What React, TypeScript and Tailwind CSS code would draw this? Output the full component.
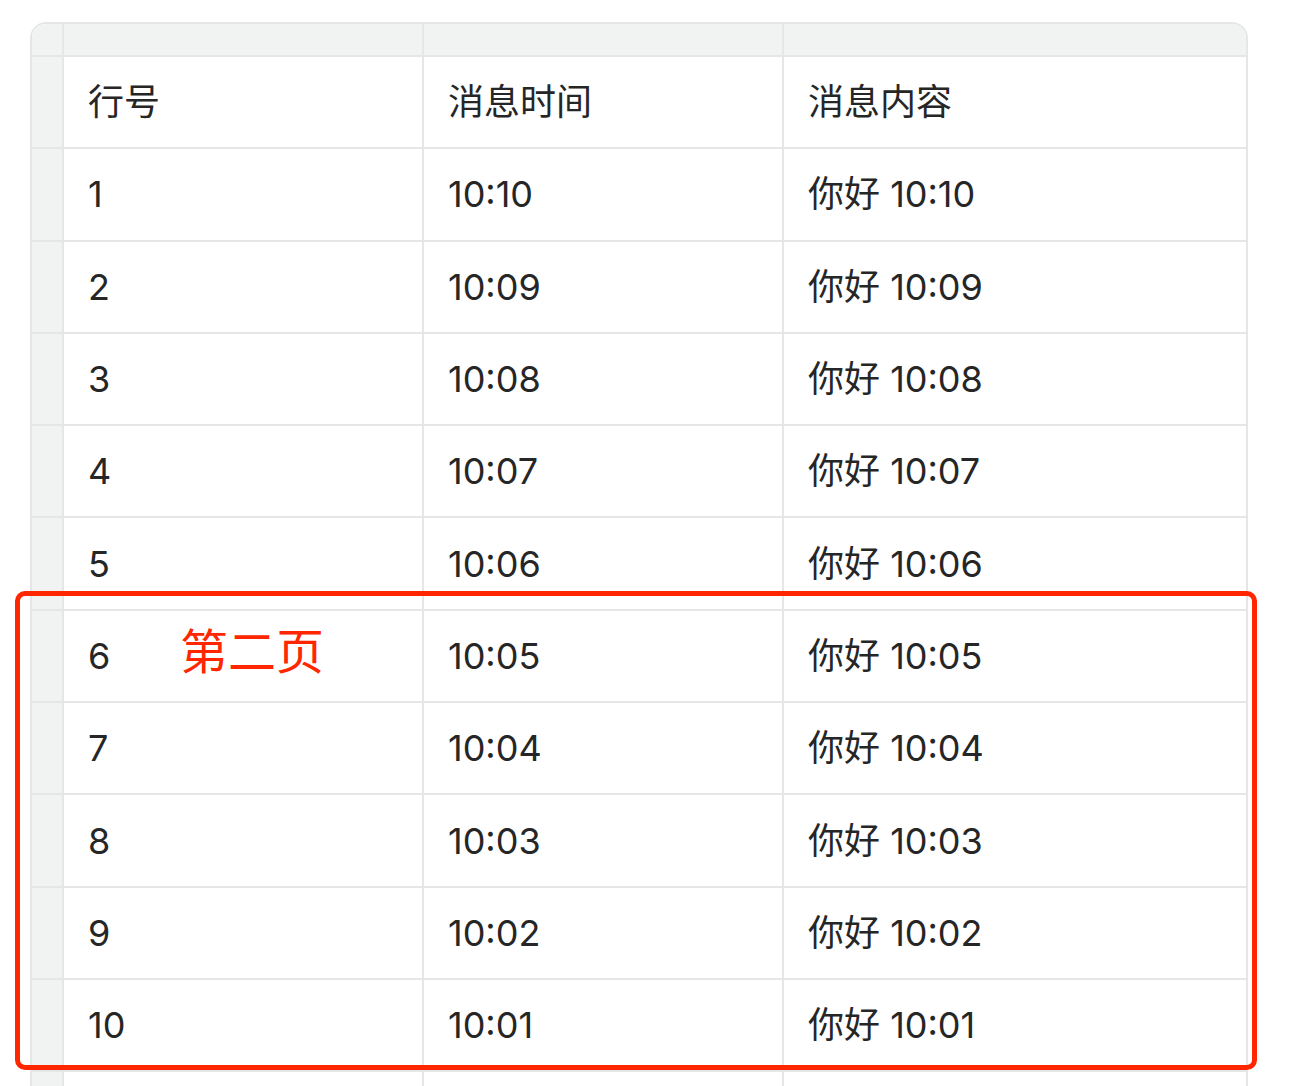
import React from "react";

const rows = [
  ["1", "10:10", "你好 10:10"],
  ["2", "10:09", "你好 10:09"],
  ["3", "10:08", "你好 10:08"],
  ["4", "10:07", "你好 10:07"],
  ["5", "10:06", "你好 10:06"],
  ["6", "10:05", "你好 10:05"],
  ["7", "10:04", "你好 10:04"],
  ["8", "10:03", "你好 10:03"],
  ["9", "10:02", "你好 10:02"],
  ["10", "10:01", "你好 10:01"],
  ["", "", ""],
];

const Row = ({ cells }: { cells: string[] }) => (
  <div className="grid grid-cols-[30px_360px_360px_1fr] h-[92.3px] border-t-2 border-[#e5e6e7] shrink-0">
    <div className="bg-[#f1f2f2]" />
    {cells.map((c, i) => (
      <div
        key={i}
        className="border-l-2 border-[#e5e6e7] pl-6 pr-6 flex items-center text-[36px] text-[#262626] whitespace-nowrap"
      >
        {c}
      </div>
    ))}
  </div>
);

export default function App() {
  return (
    <div
      className="relative w-[1296px] h-[1086px] overflow-hidden bg-white"
      style={{ fontFamily: '"Inter", "Noto Sans CJK SC", sans-serif' }}
    >
      <div className="ml-[30px] mt-[22px] w-[1218px] border-2 border-b-0 border-[#e5e6e7] rounded-t-[16px] overflow-hidden flex flex-col">
        {/* top strip */}
        <div className="grid grid-cols-[30px_360px_360px_1fr] h-[31px] bg-[#f1f2f2]">
          <div />
          <div className="border-l-2 border-[#e5e6e7]" />
          <div className="border-l-2 border-[#e5e6e7]" />
          <div className="border-l-2 border-[#e5e6e7]" />
        </div>
        <Row cells={["行号", "消息时间", "消息内容"]} />
        {rows.map((r, i) => (
          <Row key={i} cells={r} />
        ))}
      </div>

      {/* highlight box for page two */}
      <div className="absolute left-[15px] top-[591px] w-[1242px] h-[479px] border-[5px] border-[#ff2600] rounded-[10px]" />
      <div className="absolute left-[180px] top-[628px] text-[48px] leading-none text-[#ff2600]">
        第二页
      </div>
    </div>
  );
}
